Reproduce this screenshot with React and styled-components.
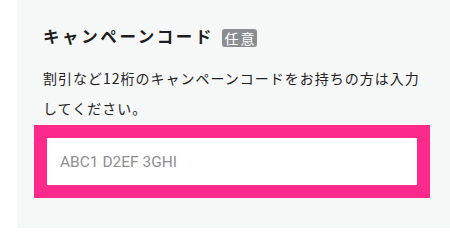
import React from 'react'
import styled, { createGlobalStyle } from 'styled-components'

const Global = createGlobalStyle`
  html, body {
    margin: 0;
    background: #fff;
  }
  body {
    font-family: "Noto Sans CJK JP", "Noto Sans", sans-serif;
    color: #222;
  }
`

const Panel = styled.section`
  margin-left: 17px;
  height: 228px;
  box-sizing: border-box;
  background: #f6f7f7;
  padding: 26px 29px 0 26px;
`

const Heading = styled.h3`
  margin: 0;
  display: flex;
  align-items: center;
  height: 20px;
  font-size: 16.5px;
  font-weight: 700;
  letter-spacing: 2.6px;
  color: #1d1d1d;
`

const Badge = styled.span`
  margin-left: 8px;
  margin-top: 4px;
  display: inline-flex;
  align-items: center;
  justify-content: center;
  width: 35px;
  height: 18px;
  border-radius: 3px;
  background: #8b8e91;
  color: #fff;
  font-size: 14px;
  font-weight: 400;
  letter-spacing: 2px;
  text-indent: 2px;
`

const Note = styled.p`
  margin: 17px 0 0;
  font-size: 14px;
  line-height: 30px;
  letter-spacing: 1px;
  color: #222;
`

const Field = styled.input`
  display: block;
  margin-top: 11px;
  width: 100%;
  height: 55px;
  box-sizing: border-box;
  border: 4px solid #fe2a8b;
  box-shadow: 0 0 0 9px #fe2a8b;
  background: #fff;
  padding: 0 13px;
  font-family: Roboto, "Noto Sans CJK JP", sans-serif;
  font-size: 15.5px;
  color: #333;
  outline: none;
  &::placeholder {
    color: #8f8f8f;
  }
`

export default function App() {
  return (
    <>
      <Global />
      <Panel>
        <Heading>
          キャンペーンコード<Badge>任意</Badge>
        </Heading>
        <Note>割引など12桁のキャンペーンコードをお持ちの方は入力してください。</Note>
        <Field placeholder="ABC1 D2EF 3GHI" />
      </Panel>
    </>
  )
}
